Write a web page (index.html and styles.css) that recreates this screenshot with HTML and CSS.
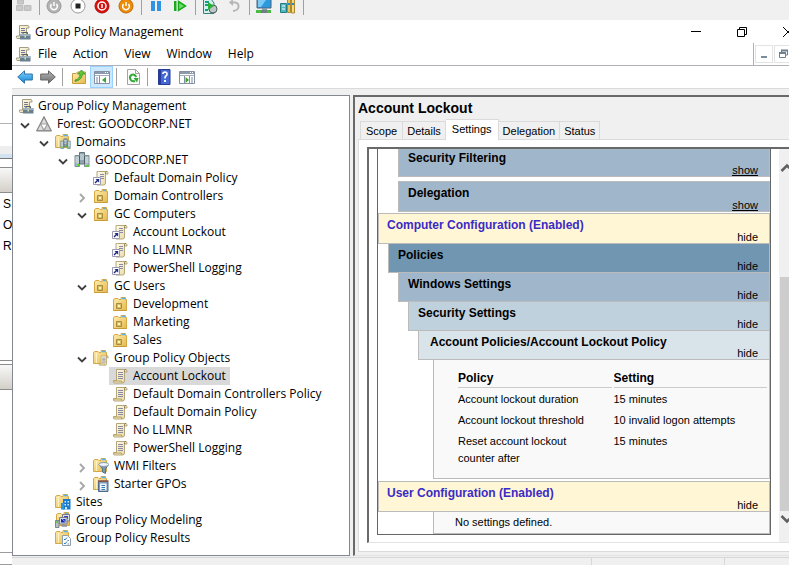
FILE: index.html
```html
<!DOCTYPE html>
<html lang="en">
<head>
<meta charset="utf-8">
<title>Group Policy Management</title>
<link rel="stylesheet" href="styles.css">
</head>
<body>
<svg class="sprite" aria-hidden="true">
  <defs>
    <linearGradient id="gold" x1="0" y1="0" x2="1" y2="1"><stop offset="0" stop-color="#ffeeb0"/><stop offset="1" stop-color="#e5b94e"/></linearGradient>
    <linearGradient id="paper" x1="0" y1="0" x2="1" y2="1"><stop offset="0" stop-color="#fffdf0"/><stop offset="1" stop-color="#e6d79f"/></linearGradient>
    <linearGradient id="blue" x1="0" y1="0" x2="0" y2="1"><stop offset="0" stop-color="#7fd0fa"/><stop offset="1" stop-color="#1486d8"/></linearGradient>
    <linearGradient id="grey" x1="0" y1="0" x2="0" y2="1"><stop offset="0" stop-color="#b5b5b5"/><stop offset="1" stop-color="#6f6f6f"/></linearGradient>
  </defs>
  <symbol id="i-scroll" viewBox="0 0 16 16">
    <path d="M4.500 1.500H14Q15.500 2 15 4H12.500V13Q12.500 15 10.500 15H2Q1 14.500 1.500 12.500H4.500Z" fill="url(#paper)" stroke="#b5a67a"/>
    <path d="M12.500 4V2.500Q12.800 1.500 14 1.500" fill="none" stroke="#8a7a4c"/>
    <path d="M2 13H9.500Q9.500 14.500 10.500 15" fill="none" stroke="#b89f59"/>
    <path d="M6 4.500H11M6 6.500H11M6 8.500H11M6 10.500H11" stroke="#8a8aa6"/>
  </symbol>
  <symbol id="i-link" viewBox="0 0 16 16">
    <path d="M5.500 1.500H14Q15.500 2 15 4H12.500V13Q12.500 15 10.500 15H4V1.500Z" fill="url(#paper)" stroke="#b5a67a"/>
    <path d="M12.500 4V2.500Q12.800 1.500 14 1.500" fill="none" stroke="#8a7a4c"/>
    <path d="M7 4.500H11M7 6.500H11M8 8.500H11" stroke="#8a8aa6"/>
    <path d="M.5 7.500H7.500V14.500H.5Z" fill="#fff" stroke="#9a9ab5"/>
    <path d="M2 13L5.500 9.500" stroke="#202a80" stroke-width="1.500"/><path d="M2.500 9H6.200V12.700Z" fill="#202a80"/>
  </symbol>
  <symbol id="i-gpm" viewBox="0 0 16 16">
    <path d="M4.500 1.500H13Q14.500 2 14 4H11.500V14.500H2Q1 14 1.500 12H4.500Z" fill="url(#paper)" stroke="#a39c82"/>
    <path d="M6 4.500H10M6 6.500H10M6 8.500H9" stroke="#77779a"/>
    <path d="M5 10.500H15.500V15.500H5Z" fill="#68808f"/><path d="M5 10H15.500V12H5Z" fill="#9db0bd"/>
    <path d="M8 10V8.500H12.500V10" fill="none" stroke="#4e5f6b"/><path d="M9.500 11.500H11V13.500H9.500Z" fill="#e6e0a5"/>
  </symbol>
  <symbol id="i-forest" viewBox="0 0 16 16">
    <path d="M8 .5L15.500 15H.5Z" fill="#a0a0a0" stroke="#808080"/>
    <path d="M8 2.500L10.500 7.500H5.500Z" fill="#dcdcdc"/><path d="M4.500 9L7 14H2Z" fill="#dedede"/><path d="M11.500 9L14 14H9Z" fill="#d0d0d0"/><path d="M5.500 8.500H10.500L8 13Z" fill="#fff"/>
  </symbol>
  <symbol id="i-folder" viewBox="0 0 16 16">
    <path d="M1.500 3.500L3 2.500H6L7 3.500H9V1.500H13.500V3.500H14.500V14.500H1.500Z" fill="url(#gold)" stroke="#d6a844"/>
    <path d="M10 2.500H13" stroke="#5ab0e8" stroke-width="1.500"/><path d="M4.500 4V14" stroke="#fff2c0"/>
  </symbol>
  <symbol id="i-ou" viewBox="0 0 16 16">
    <path d="M1.500 3.500L3 2.500H6L7 3.500H9V1.500H13.500V3.500H14.500V14.500H1.500Z" fill="url(#gold)" stroke="#d6a844"/>
    <path d="M10 2.500H13" stroke="#5ab0e8" stroke-width="1.500"/>
    <path d="M4.500 7.500H9.500V12.500H4.500Z" fill="#d9bd66" stroke="#a88c3a"/><path d="M6 9H8V11H6Z" fill="#fff5bc"/><path d="M1.500 14.500H14.500" stroke="#c89a35"/>
  </symbol>
  <symbol id="i-domain" viewBox="0 0 16 16">
    <path d="M5.500 .5H10.500V12H5.500Z" fill="#8ea3ab" stroke="#60747d"/>
    <path d="M1 3.500H5.500V14.500H1ZM10.500 3.500H15V14.500H10.500Z" fill="#a8b9bf" stroke="#7b8f97"/>
    <path d="M6 3H10M6 5H10M6 7H10M1.500 6H5M1.500 8H5M1.500 10H5M11 6H14.500M11 8H14.500M11 10H14.500" stroke="#dce8ea"/>
    <path d="M3.500 13H5.500M9 11H11M12.500 14H14.500" stroke="#48dd12" stroke-width="2"/>
    <path d="M5.500 4V12M10.500 4V12" stroke="#4b5e67"/>
  </symbol>
  <symbol id="i-domains" viewBox="0 0 16 16">
    <use href="#i-folder" x="-1" y="-1" width="16" height="16"/><use href="#i-domain" x="5" y="4" width="11" height="12"/>
  </symbol>
  <symbol id="i-gpos" viewBox="0 0 16 16">
    <use href="#i-folder" x="-1" y="-1" width="16" height="16"/><use href="#i-scroll" x="5" y="5" width="11" height="11"/>
  </symbol>
  <symbol id="i-wmi" viewBox="0 0 16 16">
    <use href="#i-folder" x="-1" y="-1" width="16" height="16"/>
    <path d="M6 6.500H15.500L12.500 11V15.500L9.500 14V11Z" fill="#7c98ad" stroke="#557287"/><ellipse cx="10.800" cy="6.500" rx="5" ry="2" fill="#eef5fa" stroke="#8497a5"/>
  </symbol>
  <symbol id="i-starter" viewBox="0 0 16 16">
    <use href="#i-folder" x="-1" y="-1" width="16" height="16"/>
    <path d="M5.500 5.500H15V15.500H5.500Z" fill="#7f9bb8" stroke="#506c8c"/><path d="M5 5H15.500" stroke="#8b5145" stroke-width="1.500"/><path d="M7 7.500H13.500V14.500H7Z" fill="#eef6fb"/><path d="M8.500 9.500H12M8.500 11.500H12M8.500 13.500H12" stroke="#3d77b8"/>
  </symbol>
  <symbol id="i-sites" viewBox="0 0 16 16">
    <use href="#i-folder" x="-1" y="-1" width="16" height="16"/>
    <path d="M8 5H15.500V15.500H8Z" fill="#1a78cd"/><path d="M6 9H9V15.500H6Z" fill="#2797dc"/><path d="M9.500 7H11V8.500H9.500ZM12.500 7H14V8.500H12.500ZM9.500 10H11V11.500H9.500ZM12.500 10H14V11.500H12.500ZM10 13H12V15.500H10Z" fill="#c3ecff"/>
  </symbol>
  <symbol id="i-modeling" viewBox="0 0 16 16">
    <use href="#i-folder" x="0" y="-1" width="16" height="16"/>
    <path d="M7.500 2.500H14.500V9H7.500Z" fill="#dde2ea" stroke="#76798c"/><path d="M9 4H13V7H9Z" fill="#3546b8"/>
    <path d="M4.500 5.500H12V12H4.500Z" fill="#d6dce7" stroke="#777b8c"/><path d="M6 7H10.500V10.500H6Z" fill="#1b24a1"/><path d="M7 7L10.500 10" stroke="#8ca7ff"/>
    <path d="M.5 8.500H4V15.500H.5Z" fill="#b8bec2" stroke="#7c858a"/><path d="M1 10H3" stroke="#42d52b" stroke-width="1.500"/><path d="M8 12V14H6.500M8 14H12" stroke="#8e939d" stroke-width="1.500" fill="none"/>
  </symbol>
  <symbol id="i-results" viewBox="0 0 16 16">
    <use href="#i-folder" x="-1" y="-1" width="16" height="16"/>
    <path d="M7.500 5.500H12.500L15.500 8.500V15.500H7.500Z" fill="#f9fbfd" stroke="#8ca0b2"/><path d="M9 9L10 10L12 7.500M9 13L10 14L12 11.500" fill="none" stroke="#2b82c6"/><path d="M12.500 10.500H14M12.500 14H14" stroke="#7b8896"/>
  </symbol>
  <symbol id="i-open" viewBox="0 0 10 10"><path d="M1 2.500L5 6.500L9 2.500" fill="none" stroke="#404040" stroke-width="1.800"/></symbol>
  <symbol id="i-closed" viewBox="0 0 10 10"><path d="M3 1L7 5L3 9" fill="none" stroke="#a6a6a6" stroke-width="1.800"/></symbol>
  <symbol id="i-console" viewBox="0 0 16 16">
    <path d="M.5 2.500H15.500V14.500H.5Z" fill="#fff" stroke="#8591a0"/><path d="M1 4H15" stroke="#8d9aab" stroke-width="2"/><path d="M1 6.500H15" stroke="#a5afba"/><path d="M11 3.500H14.500" stroke="#fff" stroke-dasharray="1 1"/>
  </symbol>
</svg>

<div class="desktop">
  <div class="behind" aria-hidden="true">
    <div class="black"></div>
    <div class="gap-a"></div>
    <div class="gap-b"></div>
    <div class="band"></div>
    <div class="gap-c"></div>
    <div class="head"></div>
    <div class="labels"><span>S</span><span>O</span><span>R</span></div>
    <div class="rule"></div>
    <div class="head"></div>
    <div class="rest"></div>
    <div class="foot"></div>
  </div>

  <div class="main">
    <div class="vm-bar" role="toolbar" aria-label="Virtual machine">
      <button aria-label="Ctrl Alt Delete"><svg viewBox="0 0 20 20"><path d="M3.500 0H9.500V4H3.500ZM2.500 5.500H9V10.500H2.500ZM10.500 5.500H17V10.500H10.500Z" fill="#c9c9c9" stroke="#bdbdbd"/></svg></button>
      <i class="sep"></i>
      <button aria-label="Start"><svg viewBox="0 0 20 20"><circle cx="10" cy="6" r="7" fill="#b3b3b3" stroke="#999"/><path d="M7.500 4Q5.500 7 8 9Q10 10.300 12 9Q14.500 7 12.500 4M10 2V6" fill="none" stroke="#fff" stroke-width="1.500"/></svg></button>
      <button aria-label="Turn off"><svg viewBox="0 0 20 20"><circle cx="10" cy="6" r="7" fill="#fff" stroke="#9a9a9a"/><path d="M7.500 3.500H12.500V8.500H7.500Z" fill="#222"/></svg></button>
      <button aria-label="Shut down"><svg viewBox="0 0 20 20"><circle cx="10" cy="6" r="7" fill="#d9110d" stroke="#ad0c0c"/><circle cx="10" cy="6" r="4" fill="none" stroke="#fff" stroke-width="1.500"/><path d="M10 4V8" stroke="#fff" stroke-width="1.500"/></svg></button>
      <button aria-label="Save"><svg viewBox="0 0 20 20"><circle cx="10" cy="6" r="7" fill="#ee8b07" stroke="#bd6c00"/><path d="M7.500 4Q5.500 7 8 9Q10 10.300 12 9Q14.500 7 12.500 4M10 2V6" fill="none" stroke="#fff" stroke-width="1.500"/></svg></button>
      <i class="sep"></i>
      <button aria-label="Pause"><svg viewBox="0 0 20 20"><path d="M5 1H9V11H5ZM11 1H15V11H11Z" fill="#3294e0"/></svg></button>
      <button aria-label="Reset"><svg viewBox="0 0 20 20"><path d="M4 1H6.500V11H4Z" fill="#18aa1c"/><path d="M8.500 1.500L15.500 6L8.500 10.500Z" fill="#6fdc6c" stroke="#18aa1c" stroke-width="1.500"/></svg></button>
      <i class="sep"></i>
      <button aria-label="Checkpoint"><svg viewBox="0 0 20 20"><path d="M3.500 -1H11L14 3V13.500H3.500Z" fill="#d5efea" stroke="#397f78"/><path d="M5 2H9M5 5H8M5 10H8" stroke="#159a8e" stroke-width="2"/><circle cx="13" cy="9" r="4" fill="#bcc6c6" stroke="#4e6060"/><path d="M8 2L14 6L8 10Z" fill="#28ae35"/></svg></button>
      <button aria-label="Revert"><svg viewBox="0 0 20 20"><path d="M6 2.500H11Q15 3 14.500 7Q14 10.500 9 11" fill="none" stroke="#b6b6b6" stroke-width="2"/><path d="M5 2.500L9 -1V6Z" fill="#b6b6b6"/></svg></button>
      <i class="sep"></i>
      <button aria-label="Enhanced session"><svg viewBox="0 0 20 20"><path d="M3 -1H17V8H3Z" fill="#2b9ae0" stroke="#46637c"/><path d="M4 0H12L7 7H4Z" fill="#7dcaf5"/><path d="M8 8H13V11H8Z" fill="#8b9ba4"/><path d="M2 11.500H17" stroke="#49bb43" stroke-width="3"/><path d="M7 11.500H13" stroke="#707e83" stroke-width="3"/></svg></button>
      <button aria-label="Share"><svg viewBox="0 0 20 20"><path d="M2.500 3.500H8.500V12.500H2.500Z" fill="#4fb9c0" stroke="#257c88"/><path d="M4 6H7M4 9H7" stroke="#fff"/><path d="M9.500 -1H12.500V12.500H9.500Z" fill="#e9c65a" stroke="#ae8831"/><path d="M13.500 -1H16.500V13H13.500Z" fill="#f3da83" stroke="#ae8831"/><path d="M10 4H17" stroke="#1f8ad0" stroke-width="2" stroke-dasharray="2 2"/></svg></button>
      <i class="sep"></i>
    </div>

    <div class="window">
      <header class="title-bar">
        <svg class="icon"><use href="#i-gpm"/></svg>
        <h1>Group Policy Management</h1>
        <div class="controls">
          <button aria-label="Minimize"><svg viewBox="0 0 12 12"><path d="M1 5.500H11" stroke="#000"/></svg></button>
          <button aria-label="Restore"><svg viewBox="0 0 12 12"><path d="M1.500 3.500H8.500V10.500H1.500ZM3.500 3V1.500H10.500V8.500H9" fill="none" stroke="#000"/></svg></button>
          <button aria-label="Close"><svg viewBox="0 0 12 12"><path d="M1 1L11 11M11 1L1 11" stroke="#000"/></svg></button>
        </div>
      </header>
      <nav class="menu-bar">
        <svg class="icon"><use href="#i-gpm"/></svg>
        <button>File</button><button>Action</button><button>View</button><button>Window</button><button>Help</button>
        <div class="child-controls">
          <button aria-label="Minimize console"><svg viewBox="0 0 12 12"><path d="M3 9H9" stroke="#7b8d9c" stroke-width="2"/></svg></button>
          <button aria-label="Restore console"><svg viewBox="0 0 12 12"><path d="M2.500 5.500H8.500V9.500H2.500ZM4.500 5V2.500H10.500V7H9" fill="none" stroke="#6d7f90"/><path d="M2 5H9M4 2.500H11" stroke="#6d7f90" stroke-width="2"/></svg></button>
          <button aria-label="Close console"></button>
        </div>
      </nav>
      <div class="tool-bar" role="toolbar" aria-label="Console">
        <button aria-label="Back"><svg class="icon" viewBox="0 0 16 16"><path d="M.7 8L7.500 1.800V5H15.300V11H7.500V14.200Z" fill="url(#blue)" stroke="#2c76ac"/></svg></button>
        <button aria-label="Forward"><svg class="icon" viewBox="0 0 16 16"><path d="M15.300 8L8.500 1.800V5H.7V11H8.500V14.200Z" fill="url(#grey)" stroke="#666"/></svg></button>
        <i class="sep"></i>
        <button aria-label="Up one level"><svg class="icon" viewBox="0 0 16 16"><path d="M1.500 4.500H5L6.500 3H14.500V14.500H1.500Z" fill="url(#gold)" stroke="#c79d40"/><path d="M4 11Q9 10 9 5H6.500L10.500 1L14 5H11.500Q11 11 4 12.500Z" fill="#5cc936" stroke="#30892a" stroke-width=".7"/></svg></button>
        <button class="pressed" aria-label="Show console tree" aria-pressed="true"><svg class="icon" viewBox="0 0 16 16"><use href="#i-console"/><path d="M5.500 7V14" stroke="#8591a0"/><path d="M2 9H4M2 11H4M2 13H4" stroke="#7488a0"/><path d="M12 8V14L8 11Z" fill="#35a52e"/></svg></button>
        <i class="sep"></i>
        <button aria-label="Refresh"><svg class="icon" viewBox="0 0 16 16"><path d="M2.500 .5H10.500L14.500 4.500V15.500H2.500Z" fill="#fbfbfb" stroke="#a4a4a4"/><path d="M10.500 .5V4.500H14.500" fill="none" stroke="#a4a4a4"/><path d="M10 12Q7 13 5.500 10.500Q4 7.500 6.500 5.800Q9.500 4.500 11.300 8" fill="none" stroke="#32a838" stroke-width="2"/><path d="M8.500 9H13.500L12 13.500Z" fill="#32a838"/></svg></button>
        <i class="sep"></i>
        <button aria-label="Help"><svg class="icon" viewBox="0 0 16 16"><path d="M2.500 .5H14V15.500H2.500Z" fill="#4468d4" stroke="#263b91"/><path d="M3 1H5V15H3Z" fill="#253b9d"/><path d="M6.800 5Q7 3 9 3Q11.300 3.200 11 5.300Q10.800 6.500 9.500 7.300Q9 8 9 9.500" fill="none" stroke="#fff" stroke-width="1.600"/><path d="M8 11H10V13H8Z" fill="#fff"/></svg></button>
        <button aria-label="Show action pane"><svg class="icon" viewBox="0 0 16 16"><use href="#i-console"/><path d="M10.500 7V14M5.500 7V14" stroke="#8591a0"/><path d="M12 9H14M12 11H14M12 13H14" stroke="#7488a0"/><path d="M6.500 8V14L10 11Z" fill="#35a52e"/></svg></button>
      </div>

      <div class="panes">
        <nav class="tree" aria-label="Console tree">
          <a class="node root" href="#"><svg class="icon"><use href="#i-gpm"/></svg>Group Policy Management</a>
          <ul>
            <li><div class="row"><button aria-label="Collapse"><svg><use href="#i-open"/></svg></button><a class="node" href="#"><svg class="icon"><use href="#i-forest"/></svg>Forest: GOODCORP.NET</a></div>
              <ul>
                <li><div class="row"><button aria-label="Collapse"><svg><use href="#i-open"/></svg></button><a class="node" href="#"><svg class="icon"><use href="#i-domains"/></svg>Domains</a></div>
                  <ul>
                    <li><div class="row"><button aria-label="Collapse"><svg><use href="#i-open"/></svg></button><a class="node" href="#"><svg class="icon"><use href="#i-domain"/></svg>GOODCORP.NET</a></div>
                      <ul>
                        <li><div class="row leaf"><a class="node" href="#"><svg class="icon"><use href="#i-link"/></svg>Default Domain Policy</a></div></li>
                        <li><div class="row"><button aria-label="Expand"><svg><use href="#i-closed"/></svg></button><a class="node" href="#"><svg class="icon"><use href="#i-ou"/></svg>Domain Controllers</a></div></li>
                        <li><div class="row"><button aria-label="Collapse"><svg><use href="#i-open"/></svg></button><a class="node" href="#"><svg class="icon"><use href="#i-ou"/></svg>GC Computers</a></div>
                          <ul>
                            <li><div class="row leaf"><a class="node" href="#"><svg class="icon"><use href="#i-link"/></svg>Account Lockout</a></div></li>
                            <li><div class="row leaf"><a class="node" href="#"><svg class="icon"><use href="#i-link"/></svg>No LLMNR</a></div></li>
                            <li><div class="row leaf"><a class="node" href="#"><svg class="icon"><use href="#i-link"/></svg>PowerShell Logging</a></div></li>
                          </ul>
                        </li>
                        <li><div class="row"><button aria-label="Collapse"><svg><use href="#i-open"/></svg></button><a class="node" href="#"><svg class="icon"><use href="#i-ou"/></svg>GC Users</a></div>
                          <ul>
                            <li><div class="row leaf"><a class="node" href="#"><svg class="icon"><use href="#i-ou"/></svg>Development</a></div></li>
                            <li><div class="row leaf"><a class="node" href="#"><svg class="icon"><use href="#i-ou"/></svg>Marketing</a></div></li>
                            <li><div class="row leaf"><a class="node" href="#"><svg class="icon"><use href="#i-ou"/></svg>Sales</a></div></li>
                          </ul>
                        </li>
                        <li><div class="row"><button aria-label="Collapse"><svg><use href="#i-open"/></svg></button><a class="node" href="#"><svg class="icon"><use href="#i-gpos"/></svg>Group Policy Objects</a></div>
                          <ul>
                            <li><div class="row leaf"><a class="node selected" href="#"><svg class="icon"><use href="#i-scroll"/></svg>Account Lockout</a></div></li>
                            <li><div class="row leaf"><a class="node" href="#"><svg class="icon"><use href="#i-scroll"/></svg>Default Domain Controllers Policy</a></div></li>
                            <li><div class="row leaf"><a class="node" href="#"><svg class="icon"><use href="#i-scroll"/></svg>Default Domain Policy</a></div></li>
                            <li><div class="row leaf"><a class="node" href="#"><svg class="icon"><use href="#i-scroll"/></svg>No LLMNR</a></div></li>
                            <li><div class="row leaf"><a class="node" href="#"><svg class="icon"><use href="#i-scroll"/></svg>PowerShell Logging</a></div></li>
                          </ul>
                        </li>
                        <li><div class="row"><button aria-label="Expand"><svg><use href="#i-closed"/></svg></button><a class="node" href="#"><svg class="icon"><use href="#i-wmi"/></svg>WMI Filters</a></div></li>
                        <li><div class="row"><button aria-label="Expand"><svg><use href="#i-closed"/></svg></button><a class="node" href="#"><svg class="icon"><use href="#i-starter"/></svg>Starter GPOs</a></div></li>
                      </ul>
                    </li>
                  </ul>
                </li>
                <li><div class="row leaf"><a class="node" href="#"><svg class="icon"><use href="#i-sites"/></svg>Sites</a></div></li>
                <li><div class="row leaf"><a class="node" href="#"><svg class="icon"><use href="#i-modeling"/></svg>Group Policy Modeling</a></div></li>
                <li><div class="row leaf"><a class="node" href="#"><svg class="icon"><use href="#i-results"/></svg>Group Policy Results</a></div></li>
              </ul>
            </li>
          </ul>
        </nav>

        <section class="details">
          <h2>Account Lockout</h2>
          <div class="tabs" role="tablist">
            <button role="tab">Scope</button><button role="tab">Details</button><button role="tab" class="active" aria-selected="true">Settings</button><button role="tab">Delegation</button><button role="tab">Status</button>
          </div>
          <div class="tab-panel" role="tabpanel">
            <div class="viewer">
              <div class="report">
                <div class="bar l2 boxed"><h3>Security Filtering</h3><a class="show" href="#">show</a></div>
                <div class="bar l2 boxed"><h3>Delegation</h3><a class="show" href="#">show</a></div>
                <div class="bar config"><h3>Computer Configuration (Enabled)</h3><a href="#">hide</a></div>
                <div class="bar l1"><h3>Policies</h3><a href="#">hide</a></div>
                <div class="bar l2"><h3>Windows Settings</h3><a href="#">hide</a></div>
                <div class="bar l3"><h3>Security Settings</h3><a href="#">hide</a></div>
                <div class="bar l4"><h3>Account Policies/Account Lockout Policy</h3><a href="#">hide</a></div>
                <div class="body">
                  <table>
                    <thead><tr><th>Policy</th><th>Setting</th></tr></thead>
                    <tbody>
                      <tr><td>Account lockout duration</td><td>15 minutes</td></tr>
                      <tr><td>Account lockout threshold</td><td>10 invalid logon attempts</td></tr>
                      <tr><td>Reset account lockout counter after</td><td>15 minutes</td></tr>
                    </tbody>
                  </table>
                </div>
                <div class="bar config"><h3>User Configuration (Enabled)</h3><a href="#">hide</a></div>
                <p class="body empty">No settings defined.</p>
              </div>
              <div class="scroll">
                <svg viewBox="0 0 16 16"><path d="M2.500 11L8 5.500L13.500 11" fill="none" stroke="#606060" stroke-width="2.500"/></svg>
                <div class="track"><div class="thumb"></div></div>
                <svg viewBox="0 0 16 16"><path d="M2.500 5L8 10.500L13.500 5" fill="none" stroke="#606060" stroke-width="2.500"/></svg>
              </div>
            </div>
          </div>
        </section>
      </div>
      <footer class="status"><span></span><span></span><span></span></footer>
    </div>
  </div>
</div>
</body>
</html>
```
FILE: styles.css
```css
* { box-sizing: border-box; }

body {
  margin: 0;
  height: 100vh;
  overflow: hidden;
  background: #fff;
  color: #000;
  font: 12px/18px "Open Sans", "Noto Sans", sans-serif;
}

button {
  margin: 0;
  padding: 0;
  border: 0;
  background: none;
  color: inherit;
  font: inherit;
}

a { color: inherit; text-decoration: none; }
h1, h2, h3, p, ul { margin: 0; padding: 0; }
svg { display: block; flex: none; }
.sprite { position: absolute; width: 0; height: 0; }
.icon { width: 16px; height: 16px; }
.sep { flex: none; width: 1px; background: #a0a0a0; }

.desktop { display: grid; grid-template-columns: 12px minmax(0, 1fr); height: 100%; }

/* Sliver of the window behind */
.behind {
  display: flex;
  flex-direction: column;
  overflow: hidden;
  font: 12px/21px "Liberation Sans", sans-serif;
}
.black { height: 70px; background: #000; }
.gap-a { height: 54px; border-bottom: 1px solid #b4b4b4; }
.gap-b { height: 22px; }
.band { height: 13px; background: linear-gradient(#eee 70%, #d3e2f0 70%); border-bottom: 1px solid #777; }
.gap-c { height: 8px; }
.head { height: 26px; border: solid #8c8c8c; border-width: 1px 0; background: linear-gradient(#f8f8f8, #d4d0c8); }
.labels { height: 167px; padding: 1px 0 0 3px; }
.labels span { display: block; }
.rule { height: 4px; border-top: 1px solid #8c8c8c; }
.rest { flex: 1; }
.foot { height: 13px; border: solid #9c9c9c; border-width: 1px 0; }

.main { display: flex; flex-direction: column; min-width: 0; height: 100vh; }

.vm-bar { display: flex; height: 20px; background: #f0f0f0; }
.vm-bar button { width: 24px; height: 20px; padding-left: 2px; }
.vm-bar svg { width: 20px; height: 20px; }
.vm-bar .sep { height: 15px; margin: 0 2px 0 3px; }

.window {
  display: flex;
  flex: 1;
  flex-direction: column;
  min-height: 0;
  overflow: hidden;
  background: #f0f0f0;
}

.title-bar { display: flex; align-items: center; height: 23px; margin-right: -22px; padding-left: 3px; background: #fff; }
.title-bar h1 { margin-left: 4px; font-size: 12px; font-weight: 400; }
.controls { display: flex; margin-left: auto; }
.controls button { display: grid; place-items: center; width: 46px; height: 20px; }
.controls svg { width: 12px; height: 12px; }

.menu-bar { display: flex; align-items: center; height: 23px; margin-right: -22px; padding-left: 3px; border-bottom: 1px solid #b0b0b8; background: #fff; }
.menu-bar .icon { margin-right: -1px; }
.menu-bar > button { padding: 0 8px; }
.child-controls { display: flex; align-items: center; gap: 1px; height: 22px; margin-left: auto; padding-left: 1px; border-left: 1px solid #b0b0b8; }
.child-controls button { display: grid; place-items: center; width: 18px; height: 18px; border: 1px solid #e3e3e3; }
.child-controls svg { width: 12px; height: 12px; }

.tool-bar { display: flex; height: 23px; padding-left: 1px; border-bottom: 1px solid #dadada; background: #fff; }
.tool-bar button { display: grid; place-items: center; width: 23px; height: 22px; border: 1px solid transparent; }
.tool-bar .pressed { border-color: #99d1ff; background: #cce8ff; }
.tool-bar .sep { height: 18px; margin: 2px 4px 0 3px; }

.panes { display: grid; flex: 1; grid-template-columns: 338px minmax(0, 1fr); gap: 3px; min-height: 0; padding: 6px 0 1px; }

.tree { overflow: hidden; padding: 1px 0 0 3px; border: 1px solid #828790; background: #fff; }
.tree ul { list-style: none; }
.tree li ul { padding-left: 19px; }
.row { display: flex; height: 18px; }
.row.leaf { padding-left: 17px; }
.row button { width: 17px; padding: 4px 0 0 4px; }
.row button svg { width: 10px; height: 10px; }
.node { display: inline-flex; align-items: center; gap: 5px; height: 18px; padding: 0 4px 0 3px; white-space: nowrap; }
.root { display: flex; gap: 4px; padding-left: 2px; }
.selected { background: #d9d9d9; }

.details {
  display: flex;
  flex-direction: column;
  min-width: 0;
  overflow: hidden;
  padding: 0 0 3px 3px;
  border: solid #696969;
  border-width: 2px 0 1px 2px;
  border-bottom-color: #e3e3e3;
  font: 11px/16px "Liberation Sans", sans-serif;
}
.details h2 { height: 22px; font-size: 14px; line-height: 22px; }

.tabs { display: flex; align-items: flex-end; height: 21px; padding-left: 2px; }
.tabs button { height: 19px; padding: 0 4px; border: 1px solid #dadada; border-left-width: 0; }
.tabs button:first-child { padding: 0 5px; border-left-width: 1px; }
.tabs .active { z-index: 1; height: 21px; padding: 0 6px 2px; border-bottom: 0; background: #fff; }

.tab-panel { display: flex; flex: 1; min-height: 0; margin-top: -1px; padding: 7px 0 8px 8px; border: 1px solid #dadada; border-right: 0; background: #fff; }
.viewer { display: flex; flex: 1; gap: 8px; min-width: 0; overflow: hidden; border: solid #696969; border-width: 2px 0 1px 2px; border-bottom-color: #e3e3e3; padding-left: 8px; }

.report { flex: 1; align-self: flex-start; min-width: 0; margin-top: -3px; border: solid #666; border-width: 0 1px 1px; }
.bar { display: flex; justify-content: space-between; height: 29px; padding: 2px 11px 0 9px; border: 1px solid #bbb; border-top-width: 0; }
.bar h3 { font-size: 12px; line-height: 18px; }
.bar a { align-self: flex-end; line-height: 11px; }
.bar .show { border-bottom: 1px solid #000; line-height: 10px; }
.bar.boxed { height: 31px; margin-bottom: 4px; border-top-width: 1px; }
.bar.boxed + .boxed { margin-bottom: 1px; }
.bar.config { height: 31px; padding-left: 8px; border-top-width: 1px; background: #fff6d5; }
.config h3 { color: #3b2bc6; }
.l1 { margin-left: 10px; background: #7096b1; }
.l2 { margin-left: 20px; background: #a0b7cb; }
.l3 { margin-left: 30px; background: #c0d1de; }
.l4 { margin-left: 40px; padding-left: 11px; background: #d9e3ea; }

.body { margin-left: 55px; border: 1px solid #bbb; border-top: 0; background: #f9f9f9; }
.body:not(.empty) { margin-bottom: 2px; padding: 8px 0 9px 22px; }
.body table { width: 100%; table-layout: fixed; border-spacing: 2px 0; }
.body th { height: 20px; padding: 0; border-bottom: 1px solid #ccc; font-size: 12px; text-align: left; }
.body td { padding: 2px 24px 2px 0; line-height: 17px; vertical-align: top; }
.body tbody tr:first-child td { padding-top: 3px; }
.empty { padding: 2px 0 2px 21px; line-height: 17px; }

.scroll { display: flex; flex: none; flex-direction: column; width: 17px; margin-right: -7px; padding: 11px 0 15px; background: #f0f0f0; }
.scroll svg { width: 16px; height: 16px; }
.track { display: flex; flex: 1; flex-direction: column; justify-content: flex-end; }
.thumb { height: 70%; margin-left: 1px; background: #cdcdcd; }

.status { display: flex; flex: none; height: 8px; border-top: 1px solid #d7d7d7; }
.status span { flex: none; width: 133px; border-right: 1px solid #d7d7d7; }
.status span:first-child { flex: 1; }
.status span:last-child { width: 64px; border: 0; }
```
